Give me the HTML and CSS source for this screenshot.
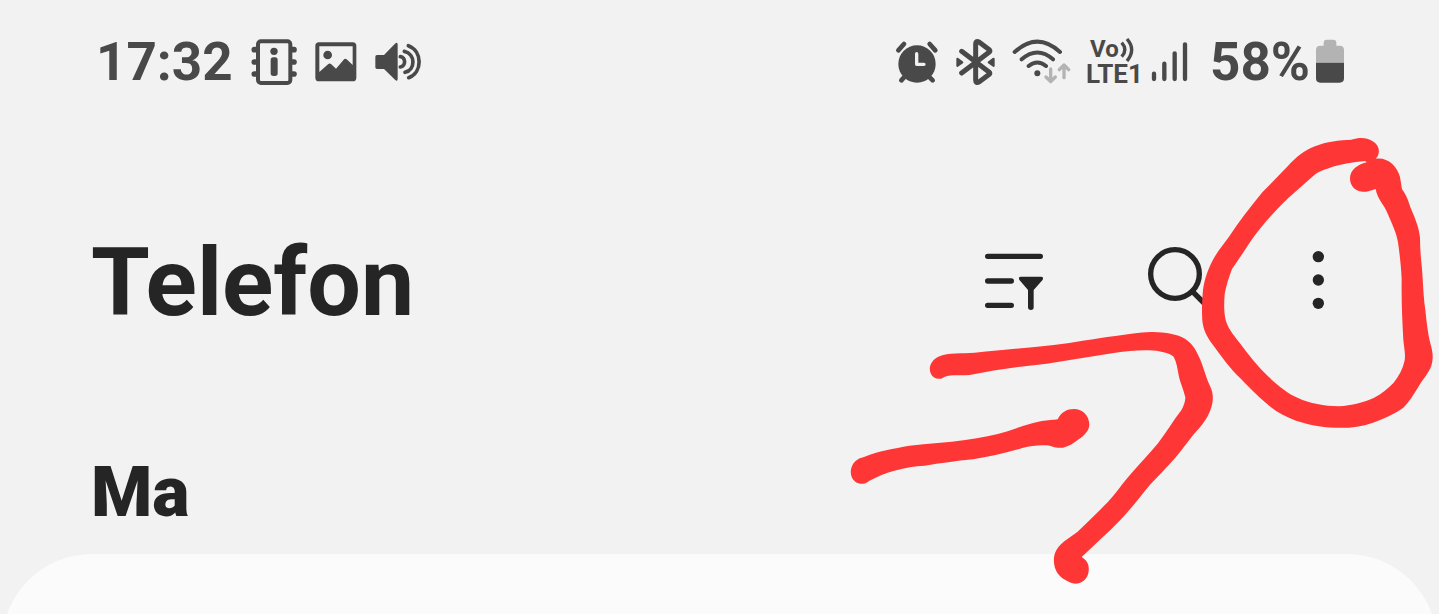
FILE: index.html
```html
<!DOCTYPE html>
<html lang="cs">
<head>
<meta charset="utf-8">
<meta name="viewport" content="width=device-width, initial-scale=1">
<title>Telefon</title>
<link rel="stylesheet" href="styles.css">
</head>
<body>
<div class="screen">
  <div class="status-bar">
    <div class="status-left">
      <time class="status-text">17:32</time>
      <svg class="status-icon" width="46" height="46" viewBox="508 55 138 138" aria-hidden="true">
        <path d="M518 87h10M518 124h10M518 160h10M627 87h10M627 124h10M627 160h10" fill="none" stroke="currentColor" stroke-width="17" stroke-linecap="round" stroke-linejoin="round"/>
        <rect x="529" y="62" width="97" height="125" rx="9" class="paper" stroke="currentColor" stroke-width="12"/>
        <circle cx="577" cy="92" r="11"/>
        <rect x="567" y="110" width="21" height="56" rx="8"/>
      </svg>
      <svg class="status-icon" width="42" height="46" viewBox="704 55 126 138" aria-hidden="true">
        <path fill-rule="evenodd" d="M716 65H817Q828 65 828 76V171Q828 182 817 182H716Q705 182 705 171V76Q705 65 716 65ZM717 77V154L744 130Q748 127 752 130L767 144L790 117Q794 112 799 116L817 133V77Z"/>
        <circle cx="742" cy="103" r="13"/>
      </svg>
      <svg class="status-icon" width="46" height="46" viewBox="887 55 138 138" aria-hidden="true">
        <path d="M893 103H914L947 69Q955 62 955 72V174Q955 184 947 177L914 145H893Q888 145 888 140V108Q888 103 893 103Z"/>
        <path d="M963 108C980 110 980 137 963 139M975 92C1009 99 1009 148 977 155M987 75C1030 91 1030 155 988 171" fill="none" stroke="currentColor" stroke-width="11" stroke-linecap="round"/>
      </svg>
    </div>
    <div class="status-right">
      <svg class="status-icon" width="48" height="46" viewBox="48 55 144 138" aria-hidden="true">
        <path d="M58 89L75 70M152 70L169 89" fill="none" stroke="currentColor" stroke-width="14" stroke-linecap="round"/>
        <path d="M75 170L67 179M152 170L161 179" fill="none" stroke="currentColor" stroke-width="14" stroke-linecap="round"/>
        <circle cx="114" cy="130" r="56"/>
        <path d="M113 99V131H135" fill="none" class="paper-line" stroke-width="10" stroke-linecap="round" stroke-linejoin="round"/>
      </svg>
      <svg class="status-icon" width="45" height="46" viewBox="228 55 135 138" aria-hidden="true">
        <path d="M248 92L331 155Q334 158 331 161L300 184Q290 189 290 178V70Q290 59 300 64L331 87Q334 91 331 94L248 157" fill="none" stroke="currentColor" stroke-width="15" stroke-linecap="round" stroke-linejoin="round"/>
        <path d="M235 114L250 125L235 136ZM344 114L329 125L344 136Z" stroke="currentColor" stroke-width="6" stroke-linejoin="round"/>
      </svg>
      <svg class="status-icon" width="62" height="46" viewBox="399 55 186 138" aria-hidden="true">
        <path d="M407 94Q475 32 543 94M428 116Q475 75 522 116M449 136Q475 115 501 136" fill="none" stroke="currentColor" stroke-width="12" stroke-linecap="round"/>
        <circle cx="475" cy="158" r="9"/>
        <path d="M515 145V182M501 169L515 183L529 169M555 171V134M541 147L555 133L569 147" fill="none" class="faint-line" stroke-width="10" stroke-linecap="round" stroke-linejoin="round"/>
      </svg>
      <div class="volte">
        <div class="volte-top">
          <span>Vo</span>
          <svg width="16" height="24" viewBox="0 0 48 72" aria-hidden="true">
            <path d="M8 14Q27 35 8 56M24 3Q52 35 24 69" fill="none" stroke="currentColor" stroke-width="10"/>
          </svg>
        </div>
        <div class="volte-bottom">LTE1</div>
      </div>
      <svg class="status-icon" width="46" height="46" viewBox="39 55 138 138" aria-hidden="true">
        <path d="M45 159V175M76 129V175M107 98V175M138 71V175" fill="none" stroke="currentColor" stroke-width="13" stroke-linecap="round"/>
      </svg>
      <div class="battery">
        <span class="status-text">58%</span>
        <svg class="status-icon" width="28" height="46" viewBox="528 55 84 138" aria-hidden="true">
          <path class="faint" d="M551 75V66Q551 57 560 57H580Q589 57 589 66V75H599Q612 75 612 88V126H528V88Q528 75 541 75Z"/>
          <path d="M528 126H612V173Q612 186 599 186H541Q528 186 528 173Z"/>
        </svg>
      </div>
    </div>
  </div>

  <header class="app-header">
    <h1 class="title">Telefon</h1>
    <div class="actions">
      <button class="action" type="button" aria-label="Filter">
        <svg width="64" height="64" viewBox="66 63 192 192" aria-hidden="true">
          <path d="M83 79H241M83 153H154M83 226H154" fill="none" stroke="currentColor" stroke-width="16" stroke-linecap="round"/>
          <path d="M183 140H243Q253 141 247 151L221 180V232Q221 240 213 240Q204 240 204 232V180L179 151Q173 141 183 140Z"/>
        </svg>
      </button>
      <button class="action" type="button" aria-label="Search">
        <svg width="64" height="64" viewBox="558 63 192 192" overflow="visible" aria-hidden="true">
          <circle cx="645" cy="132" r="73" fill="none" stroke="currentColor" stroke-width="16"/>
          <path d="M697 184L741 228" fill="none" stroke="currentColor" stroke-width="16" stroke-linecap="round"/>
        </svg>
      </button>
      <button class="action" type="button" aria-label="More options">
        <svg width="16" height="64" viewBox="0 6 48 192" aria-hidden="true">
          <circle cx="25" cy="23" r="17"/>
          <circle cx="25" cy="93" r="17"/>
          <circle cx="25" cy="163" r="17"/>
        </svg>
      </button>
    </div>
  </header>

  <main class="content">
    <h2 class="section-title">Ma</h2>
    <div class="card"></div>
  </main>

  <svg class="annotation" width="599" height="480" viewBox="0 0 1797 1440" aria-hidden="true">
    <path transform="translate(1050 0)" fill-rule="evenodd" d="M484 59C510 51 531 53 547 63C562 72 569 86 566 99C565 108 560 113 557 116C590 110 621 136 630 171L636 208C650 227 655 243 662 264C676 296 688 326 690 354C690 382 692 407 695 436C699 475 699 519 706 570C711 618 715 650 724 681C729 702 730 717 724 737C715 761 699 777 688 796C674 819 657 848 640 863C614 882 579 897 549 908C508 922 471 925 434 923C390 922 352 913 318 902C284 889 251 871 228 849C201 827 176 801 151 775C120 746 92 706 69 675C50 650 40 629 37 602C35 570 36 543 39 510C43 478 55 444 72 414C86 389 103 370 117 350C146 307 179 263 217 217L293 139C322 107 345 91 375 79C410 64 448 61 484 59ZM526 123C490 126 446 134 420 143C397 150 381 157 367 170L295 234C251 277 214 317 184 361C160 397 145 420 126 447C117 472 108 497 104 523C102 550 101 579 108 604C117 631 136 652 151 671C177 707 205 741 234 769C266 798 292 820 324 834C359 850 403 858 446 859C485 857 523 847 551 834C575 821 594 806 611 788C626 768 638 748 643 725C648 706 642 683 640 660C637 604 634 544 635 476C633 437 629 403 624 367C620 341 608 315 589 272C579 250 563 239 557 207C536 215 523 216 517 215C496 214 480 196 480 176C480 150 502 134 530 127Z"/>
    <path transform="translate(0 600)" d="M313 171C298 182 279 175 273 162C263 141 275 120 295 110C327 96 364 101 404 98C489 89 565 84 641 75C707 68 758 56 826 48C864 43 902 35 939 36C976 37 1012 42 1036 57C1061 73 1071 98 1080 117C1093 148 1098 173 1110 198C1119 216 1120 234 1117 250C1111 279 1097 302 1080 322C1053 350 1032 383 1006 413C982 441 956 466 930 494C899 532 874 565 841 600C803 640 763 674 725 711C742 721 748 735 746 752C745 773 729 789 708 791C691 790 674 780 663 771C646 757 640 734 642 712C645 691 657 677 674 663L712 636C743 607 774 576 803 547C825 523 842 498 862 474C893 437 926 405 954 370C979 337 999 303 1024 271C1032 256 1036 243 1036 232C1029 204 1020 186 1016 166C1012 145 1010 126 1001 110C987 99 959 92 926 91C892 90 858 94 826 98C756 109 688 120 620 131C543 139 465 150 389 165C358 168 332 163 313 171Z"/>
    <path transform="translate(0 600)" d="M87 483C74 495 57 493 46 485C30 474 29 450 38 434C45 421 56 415 74 410C115 392 161 386 208 377C264 370 323 368 376 360C423 354 464 346 503 334C545 319 588 303 631 300C640 299 647 300 653 298C664 276 681 267 702 267C728 267 748 287 748 314C747 334 732 346 716 358C701 370 687 379 669 383C654 385 640 381 629 377C602 374 575 377 547 384C499 398 448 410 399 418C348 423 301 430 254 437C194 440 135 456 87 483Z"/>
  </svg>
</div>
</body>
</html>
```

FILE: styles.css
```css
:root {
  --background: #f2f2f2;
  --card: #fbfbfb;
  --ink: #252525;
  --status: #494949;
  --faint: #b3b3b3;
  --marker: #ff3636;
}

* {
  box-sizing: border-box;
}

body {
  margin: 0;
  background: var(--background);
  color: var(--ink);
  font-family: Roboto, "Liberation Sans", sans-serif;
}

svg {
  display: block;
  fill: currentColor;
}

.screen {
  position: relative;
  display: flex;
  flex-direction: column;
  height: 100vh;
  overflow: hidden;
}

.status-bar {
  display: flex;
  flex: none;
  align-items: center;
  justify-content: space-between;
  height: 124px;
  padding: 0 95px 0 96px;
  color: var(--status);
}

.status-left {
  display: flex;
  align-items: center;
  gap: 18px;
}

.status-right {
  display: flex;
  align-items: center;
  gap: 12px;
}

.status-icon {
  flex: none;
  overflow: visible;
}

.status-text {
  font-size: 53px;
  font-weight: 700;
  line-height: 64px;
}

.paper {
  fill: var(--background);
}

.paper-line {
  stroke: var(--background);
}

.faint {
  fill: var(--faint);
}

.faint-line {
  stroke: var(--faint);
}

.volte {
  width: 54px;
  font-size: 26px;
  font-weight: 700;
  line-height: 25px;
}

.volte-top {
  display: flex;
  align-items: center;
  padding-left: 4px;
  font-size: 24px;
}

.battery {
  display: flex;
  align-items: center;
  gap: 6px;
}

.app-header {
  display: flex;
  flex: none;
  align-items: center;
  justify-content: space-between;
  height: 318px;
  padding: 0 113px 0 91px;
}

.title {
  margin: 0;
  font-size: 95px;
  font-weight: 700;
  line-height: 116px;
}

.actions {
  display: flex;
  align-items: center;
  gap: 100px;
}

.action {
  padding: 0;
  border: 0;
  background: none;
  color: inherit;
  cursor: pointer;
}

.content {
  display: flex;
  flex: 1;
  flex-direction: column;
  min-height: 0;
}

.section-title {
  margin: 0;
  padding: 8px 91px 20px;
  font-size: 70px;
  font-weight: 900;
  line-height: 84px;
}

.card {
  flex: 1 0 180px;
  margin: 0 2px;
  border-radius: 90px 90px 0 0;
  background: var(--card);
}

.annotation {
  position: absolute;
  top: 120px;
  right: 0;
  color: var(--marker);
  pointer-events: none;
}
```
